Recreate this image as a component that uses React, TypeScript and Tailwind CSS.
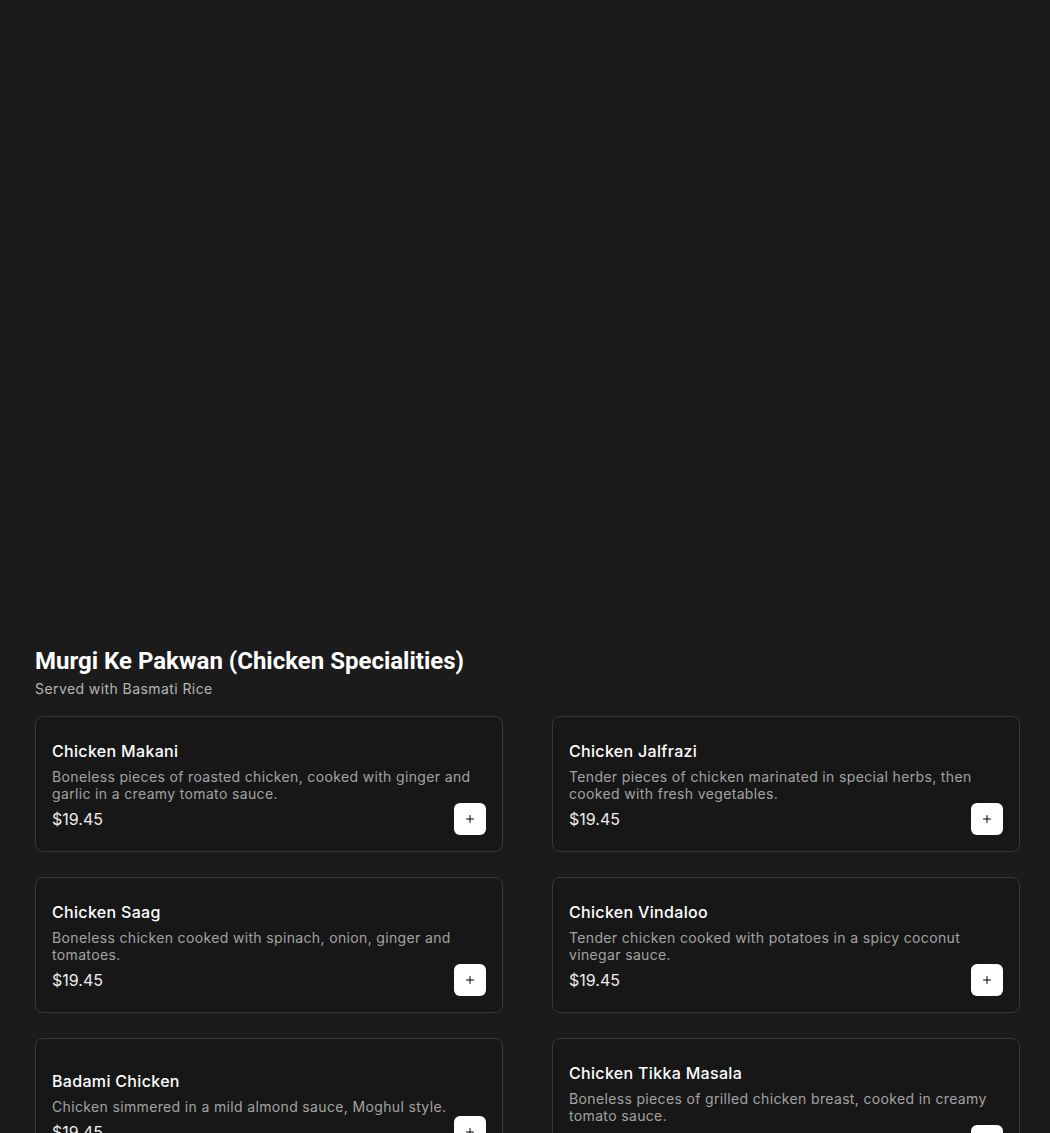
import { Plus } from 'lucide-react';

interface Dish {
    name: string;
    description: string;
    price: string;
}

const dishes: Dish[] = [
    {
        name: 'Chicken Makani',
        description: 'Boneless pieces of roasted chicken, cooked with ginger and garlic in a creamy tomato sauce.',
        price: '$19.45'
    },
    {
        name: 'Chicken Jalfrazi',
        description: 'Tender pieces of chicken marinated in special herbs, then cooked with fresh vegetables.',
        price: '$19.45'
    },
    {
        name: 'Chicken Saag',
        description: 'Boneless chicken cooked with spinach, onion, ginger and tomatoes.',
        price: '$19.45'
    },
    {
        name: 'Chicken Vindaloo',
        description: 'Tender chicken cooked with potatoes in a spicy coconut vinegar sauce.',
        price: '$19.45'
    },
    {
        name: 'Badami Chicken',
        description: 'Chicken simmered in a mild almond sauce, Moghul style.',
        price: '$19.45'
    },
    {
        name: 'Chicken Tikka Masala',
        description: 'Boneless pieces of grilled chicken breast, cooked in creamy tomato sauce.',
        price: '$19.45'
    }
];

function DishCard({ dish }: { dish: Dish }) {
    return (
        <div className="h-[136px] rounded-lg border border-[#383838] bg-[#171717] px-4 pt-[5px] flex flex-col justify-center">
            <h3 className="text-white text-base leading-6 font-medium tracking-[0.02em] mb-[5px]">{dish.name}</h3>
            <p className="text-[#a3a3a3] text-sm leading-[17px] tracking-[0.025em]">{dish.description}</p>
            <div className="flex items-center justify-between mt-[1px]">
                <span className="text-[#ececec] text-base">{dish.price}</span>
                <button className="w-8 h-8 rounded-md bg-white flex items-center justify-center text-black">
                    <Plus size={12} strokeWidth={2} />
                </button>
            </div>
        </div>
    );
}

export default function App() {
    return (
        <div className="min-h-screen bg-[#1b1b1b] font-['Inter',sans-serif]">
            {/* Hero area (empty) */}
            <div className="h-[645px]" />

            <section className="pl-[35px] pr-[30px] pb-10">
                <h2 className="text-white text-2xl leading-8 font-bold font-['Roboto',sans-serif]">
                    Murgi Ke Pakwan (Chicken Specialities)
                </h2>
                <p className="text-[#b5b5b5] text-sm leading-5 tracking-[0.03em] mt-[2px]">Served with Basmati Rice</p>

                <div className="grid grid-cols-2 gap-x-[49px] gap-y-[25px] mt-[17px]">
                    {dishes.map((dish) => (
                        <DishCard key={dish.name} dish={dish} />
                    ))}
                </div>
            </section>
        </div>
    );
}
